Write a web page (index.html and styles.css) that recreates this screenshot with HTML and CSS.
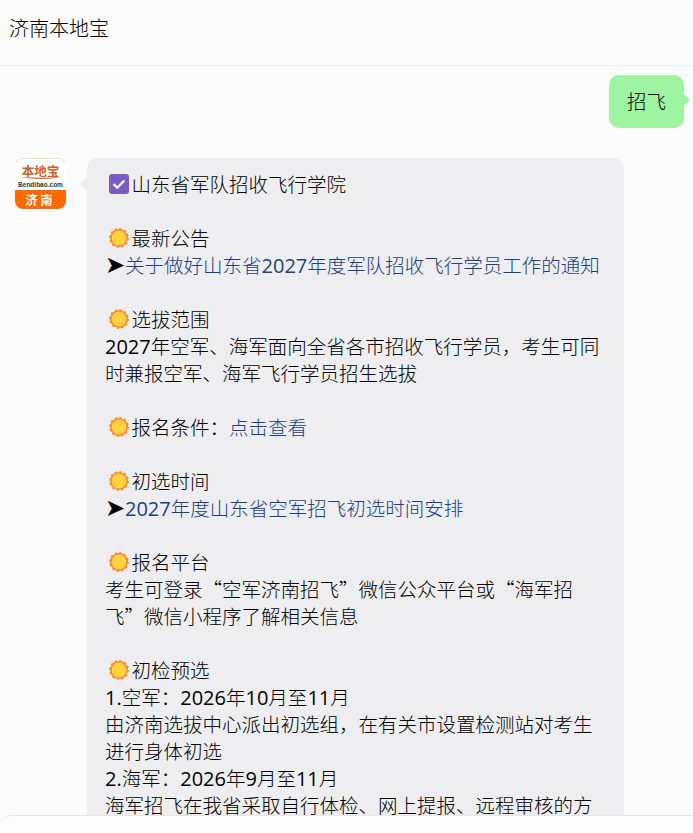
FILE: index.html
```html
<!DOCTYPE html>
<html lang="zh-CN">
<head>
  <meta charset="UTF-8">
  <meta name="viewport" content="width=device-width, initial-scale=1.0">
  <title>济南本地宝</title>
  <link rel="stylesheet" href="styles.css">
</head>
<body>
  <svg class="defs">
    <symbol id="check" viewBox="0 0 20 20">
      <rect width="20" height="20" rx="3" fill="#7b5cc6"/>
      <path d="M4.500 10l3.800 3.800 7-7.300" fill="none" stroke="#fff" stroke-width="2.200"/>
    </symbol>
    <symbol id="sun" viewBox="0 0 20 20">
      <circle cx="10" cy="10" r="9" fill="#f58a33"/>
      <circle cx="10" cy="10" r="9.200" fill="none" stroke="#f58a33" stroke-width="1.500" stroke-dasharray="2.400 2.420"/>
      <circle cx="10" cy="10" r="7.400" fill="#ffd23f"/>
    </symbol>
  </svg>

  <div class="header">济南本地宝</div>

  <div class="chat">
    <div class="row-right">
      <div class="bubble-me">招飞</div>
    </div>

    <div class="row-left">
      <div class="avatar">
        <div class="avatar-top">
          <div class="avatar-name">本地宝</div>
          <svg class="avatar-swoosh" viewBox="0 0 44 4"><path d="M1 1Q22 5 43 1Q22 2.500 1 1z" fill="#c8642a"/></svg>
          <div class="avatar-site">Bendibao.com</div>
        </div>
        <div class="avatar-city">济南</div>
      </div>
      <div class="bubble">
        <div><svg class="emoji"><use href="#check"/></svg>山东省军队招收飞行学院</div>
        <br>
        <div><svg class="emoji"><use href="#sun"/></svg>最新公告</div>
        <div><span class="arrow">➤</span><a href="#">关于做好山东省<span class="num">2027</span>年度军队招收飞行学员工作的通知</a></div>
        <br>
        <div><svg class="emoji"><use href="#sun"/></svg>选拔范围</div>
        <div><span class="num">2027</span>年空军、海军面向全省各市招收飞行学员，考生可同时兼报空军、海军飞行学员招生选拔</div>
        <br>
        <div><svg class="emoji"><use href="#sun"/></svg>报名条件：<a href="#">点击查看</a></div>
        <br>
        <div><svg class="emoji"><use href="#sun"/></svg>初选时间</div>
        <div><span class="arrow">➤</span><a href="#"><span class="num">2027</span>年度山东省空军招飞初选时间安排</a></div>
        <br>
        <div><svg class="emoji"><use href="#sun"/></svg>报名平台</div>
        <div>考生可登录“空军济南招飞”微信公众平台或“海军招飞”微信小程序了解相关信息</div>
        <br>
        <div><svg class="emoji"><use href="#sun"/></svg>初检预选</div>
        <div><span class="num">1.</span>空军：<span class="num">2026</span>年<span class="num">10</span>月至<span class="num">11</span>月</div>
        <div>由济南选拔中心派出初选组，在有关市设置检测站对考生进行身体初选</div>
        <div><span class="num">2.</span>海军：<span class="num">2026</span>年<span class="num">9</span>月至<span class="num">11</span>月</div>
        <div>海军招飞在我省采取自行体检、网上提报、远程审核的方</div>
      </div>
    </div>
  </div>

  <div class="footer"></div>
</body>
</html>
```

FILE: styles.css
```css
html, body {
  height: 100%;
}
body {
  margin: 0;
  overflow: hidden;
  position: relative;
  background-color: #fbfbfb;
  color: #000000;
  font-family: "Noto Sans CJK SC", "Liberation Sans", sans-serif;
  font-weight: 300;
  text-spacing-trim: space-all;
}
.defs {
  display: none;
}
.header {
  height: 65px;
  line-height: 56px;
  padding-left: 9px;
  font-size: 20px;
  border-bottom: 1px solid #eeeeee;
}
.chat {
  padding-top: 9px;
}
.row-right {
  display: flex;
  justify-content: flex-end;
  padding-right: 9px;
}
.bubble-me {
  position: relative;
  width: 75px;
  height: 53px;
  line-height: 52px;
  text-align: center;
  font-size: 19.5px;
  background-color: #9ff4a1;
  border-radius: 10px;
}
.bubble-me::after {
  content: "";
  position: absolute;
  top: 20px;
  right: -4px;
  width: 10px;
  height: 10px;
  background-color: #9ff4a1;
  border-radius: 2px;
  transform: rotate(45deg);
}
.row-left {
  display: flex;
  margin-top: 30px;
  padding-left: 15px;
}
.avatar {
  width: 51px;
  height: 51px;
  border-radius: 8px;
  overflow: hidden;
  background-color: #ffffff;
  display: flex;
  flex-direction: column;
  flex-shrink: 0;
  box-shadow: inset 0 1px 0 #f6dcc6;
}
.avatar-top {
  flex: 1;
  display: flex;
  flex-direction: column;
  align-items: center;
  padding-top: 6px;
}
.avatar-name {
  font-size: 12.5px;
  line-height: 13px;
  font-weight: 700;
  color: #c8642a;
}
.avatar-swoosh {
  display: block;
  width: 44px;
  height: 4px;
  margin-top: -1px;
}
.avatar-site {
  margin-top: 1px;
  font-family: "Liberation Sans", sans-serif;
  font-size: 6.500px;
  line-height: 8px;
  font-weight: 700;
  color: #333333;
}
.avatar-city {
  height: 19px;
  line-height: 19px;
  text-align: center;
  font-size: 12px;
  font-weight: 700;
  letter-spacing: 3px;
  color: #ffffff;
  background-color: #ff6a00;
}
.bubble {
  position: relative;
  width: 501px;
  margin-left: 21px;
  padding: 12px 18px 13px;
  font-size: 19.5px;
  line-height: 27px;
  background-color: #eeeef0;
  border-radius: 10px;
}
.bubble::before {
  content: "";
  position: absolute;
  top: 21px;
  left: -5px;
  width: 10px;
  height: 10px;
  background-color: #eeeef0;
  border-radius: 2px;
  transform: rotate(45deg);
}
.bubble a {
  color: #1d3f85;
  text-decoration: none;
}
.num {
  font-family: "Open Sans", sans-serif;
  font-size: 20px;
  font-weight: 400;
  line-height: 1;
}
.arrow {
  font-size: 23.500px;
  line-height: 1;
}
.emoji {
  width: 20px;
  height: 20px;
  margin: 0 3px 0 3.500px;
  vertical-align: -2px;
}
.footer {
  position: absolute;
  left: 0;
  right: 0;
  bottom: 0;
  height: 17px;
  background-color: #fdfdfd;
  border-top: 1px solid #e6e6e6;
  border-top-left-radius: 12px;
}
```
